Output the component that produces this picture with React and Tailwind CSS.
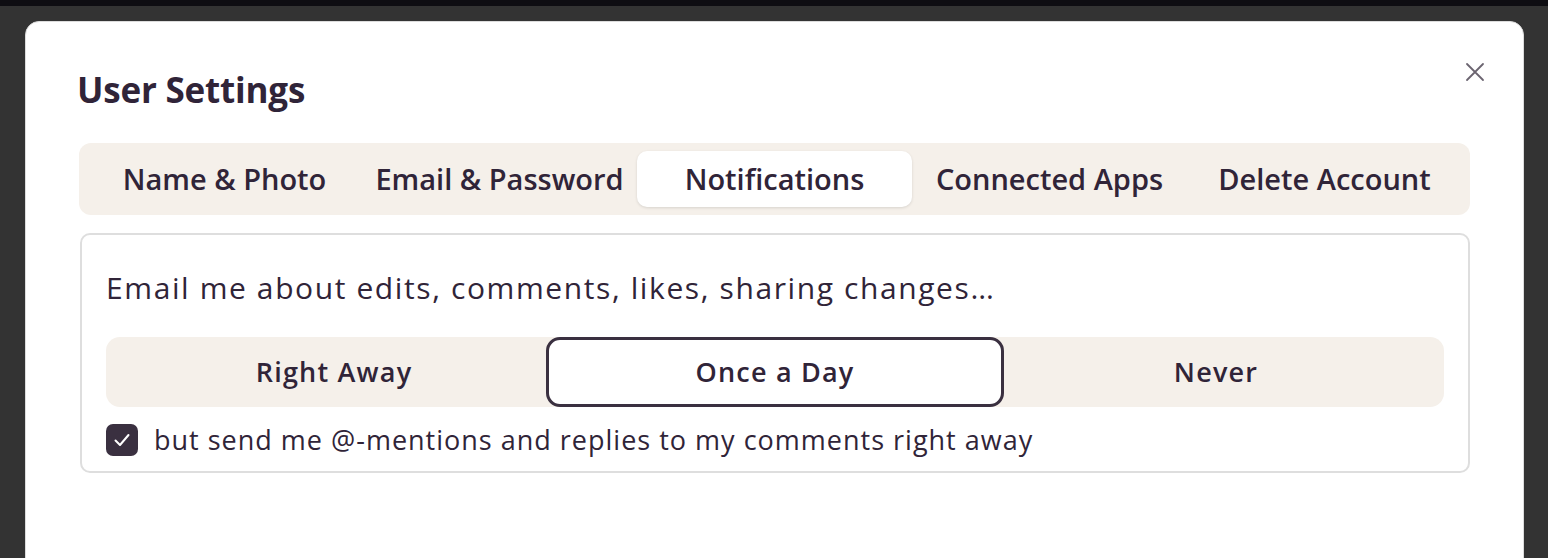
import React, { useState } from "react";

const tabs = ["Name & Photo", "Email & Password", "Notifications", "Connected Apps", "Delete Account"];
const options = ["Right Away", "Once a Day", "Never"];

export default function App() {
  const [tab, setTab] = useState("Notifications");
  const [freq, setFreq] = useState("Once a Day");
  const [mentions, setMentions] = useState(true);

  return (
    <div className="h-[558px] overflow-hidden bg-[#333333] text-[#302438] border-t-[6px] border-[#0e0d12]" style={{ fontFamily: "'Open Sans', 'Noto Sans', sans-serif" }}>
      <div className="ml-[25px] mr-[24px] mt-[15px] h-[600px] bg-white rounded-[14px] border border-[#dcdcdc] relative">
        <button className="absolute right-[38px] top-[40px] text-[#6b6470]">
          <svg width="20" height="20" viewBox="0 0 20 20" fill="none" stroke="currentColor" strokeWidth="1.8" strokeLinecap="round">
            <path d="M2 2 L18 18 M18 2 L2 18" />
          </svg>
        </button>
        <div className="pl-[51px] pr-[53px] pt-[48px]">
          <h1 className="text-[35px] font-bold leading-[40px] -tracking-[0.2px]">User Settings</h1>

          <div className="mt-[33px] ml-[2px] grid grid-cols-5 bg-[#f5f0ea] rounded-[12px] p-[8px]">
            {tabs.map((t) => (
              <button
                key={t}
                onClick={() => setTab(t)}
                className={`h-[56px] rounded-[10px] text-[29px] font-semibold leading-[34px] ${tab === t ? "bg-white shadow-[0_1px_3px_rgba(0,0,0,0.12)]" : ""}`}
              >
                {t}
              </button>
            ))}
          </div>

          <div className="mt-[18px] ml-[3px] border-2 border-[#dedede] rounded-[10px] px-[24px] pt-[33px] pb-[14px]">
            <p className="text-[30px] font-medium leading-[40px] tracking-[1.6px]">Email me about edits, comments, likes, sharing changes…</p>

            <div className="mt-[29px] grid grid-cols-3 bg-[#f5f0ea] rounded-[14px] h-[70px]">
              {options.map((o, i) => (
                <button
                  key={o}
                  onClick={() => setFreq(o)}
                  className={`text-[27px] font-semibold tracking-[1.2px] rounded-[14px] ${i === 0 ? "pl-[10px]" : ""} ${i === 2 ? "pr-[10px]" : ""} ${freq === o ? "bg-white border-[3px] border-[#3a3040] -mx-[6px]" : ""}`}
                >
                  {o}
                </button>
              ))}
            </div>

            <label className="mt-[16px] flex items-center gap-[16px] cursor-pointer">
              <span
                onClick={() => setMentions(!mentions)}
                className={`w-[32px] h-[32px] shrink-0 rounded-[7px] flex items-center justify-center ${mentions ? "bg-[#3a3040]" : "border-2 border-[#3a3040]"}`}
              >
                {mentions && (
                  <svg width="20" height="20" viewBox="0 0 20 20" fill="none" stroke="white" strokeWidth="2" strokeLinecap="round" strokeLinejoin="round">
                    <path d="M3.5 10.5 L8 15 L16.5 5" />
                  </svg>
                )}
              </span>
              <span className="text-[27px] leading-[34px] tracking-[1px]">but send me @-mentions and replies to my comments right away</span>
            </label>
          </div>
        </div>
      </div>
    </div>
  );
}
